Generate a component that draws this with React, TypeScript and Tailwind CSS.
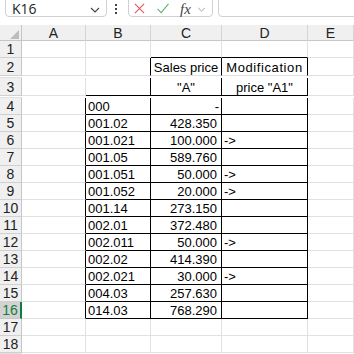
import React from "react";

type Cell = {
  text?: string;
  align?: "left" | "right" | "center";
  extra?: string;
  r?: boolean; // black right border
  b?: boolean; // black bottom border
};

const cols = ["A", "B", "C", "D", "E"];

const rowHeights = [17, 20, 20, 17, 17, 17, 17, 17, 17, 17, 17, 17, 17, 17, 17, 17, 17, 17];

const data: [string, string, string][] = [
  ["000", "-", ""],
  ["001.02", "428.350", ""],
  ["001.021", "100.000", "->"],
  ["001.05", "589.760", ""],
  ["001.051", "50.000", "->"],
  ["001.052", "20.000", "->"],
  ["001.14", "273.150", ""],
  ["002.01", "372.480", ""],
  ["002.011", "50.000", "->"],
  ["002.02", "414.390", ""],
  ["002.021", "30.000", "->"],
  ["004.03", "257.630", ""],
  ["014.03", "768.290", ""],
];

const buildRow = (row: number): Cell[] => {
  // cells A..E
  if (row === 1) return [{}, {}, { b: true }, { b: true }, {}];
  if (row === 2)
    return [
      {},
      { r: true },
      { text: "Sales price", align: "center", r: true },
      { text: "Modification", align: "center", extra: "tracking-[0.6px]", r: true },
      {},
    ];
  if (row === 3)
    return [
      {},
      { r: true, b: true },
      { text: '"A"', align: "center", r: true, b: true },
      { text: 'price "A1"', align: "center", r: true, b: true },
      {},
    ];
  const d = data[row - 4];
  if (d) {
    return [
      { r: true },
      { text: d[0], align: "left", r: true, b: true },
      { text: d[1], align: "right", extra: d[1] === "-" ? "pr-[2px]" : "pr-[4px]", r: true, b: true },
      { text: d[2], align: "left", r: true, b: true },
      {},
    ];
  }
  return [{}, {}, {}, {}, {}];
};

const ChevronDown = ({ className }: { className?: string }) => (
  <svg viewBox="0 0 10 6" className={className} fill="none" stroke="currentColor" strokeWidth="1.1">
    <path d="M1 1l4 4 4-4" />
  </svg>
);

export default function App() {
  return (
    <div className="w-[354px] h-[354px] overflow-hidden bg-white font-['Liberation_Sans',Arial,sans-serif]">
      {/* formula bar */}
      <div className="h-[25px] overflow-hidden bg-white">
        <div className="-mt-[6px] flex items-start">
          <div className="ml-[5px] flex h-[23px] w-[102px] items-start justify-between rounded-[4px] border border-[#d1d1d1] px-[6px] pt-[6px]">
            <span className="text-[14px] leading-[16px] text-[#242424] font-['Open_Sans',sans-serif]">K16</span>
            <ChevronDown className="mt-[6px] h-[6px] w-[10px] text-[#444]" />
          </div>
          <div className="ml-[8px] mt-[10px] flex flex-col gap-[2px]">
            <span className="block h-[2px] w-[2px] bg-[#444]" />
            <span className="block h-[2px] w-[2px] bg-[#444]" />
            <span className="block h-[2px] w-[2px] bg-[#444]" />
          </div>
          <div className="ml-[11px] flex h-[23px] w-[85px] items-start rounded-[4px] border border-[#d1d1d1] pl-[5px] pt-[7px]">
            <svg viewBox="0 0 12 12" className="mt-[1px] h-[11px] w-[11px]" fill="none" stroke="#e0575b" strokeWidth="1.2">
              <path d="M1 1l10 10M11 1L1 11" />
            </svg>
            <svg viewBox="0 0 14 12" className="ml-[11px] mt-[1px] h-[11px] w-[14px]" fill="none" stroke="#5cb66e" strokeWidth="1.2">
              <path d="M1 6.5l4 4L13 1" />
            </svg>
            <span className="ml-[10px] text-[15px] leading-[14px] italic text-[#444] font-['Liberation_Serif',serif]">
              fx
            </span>
            <ChevronDown className="ml-[6px] mt-[5px] h-[5px] w-[9px] text-[#999]" />
          </div>
          <div className="ml-[5px] h-[23px] flex-1 -mr-[10px] rounded-[4px] border border-[#d1d1d1]" />
        </div>
      </div>

      {/* column headers */}
      <div className="grid h-[16px] grid-cols-[22px_64px_65px_71px_86px_1fr] border-b border-[#c6c6c6] bg-[#f0f0f0]">
        <div className="flex items-end justify-end border-r border-[#c6c6c6] p-[2px]">
          <svg viewBox="0 0 10 10" className="h-[9px] w-[9px]">
            <path d="M10 0L10 10L0 10Z" fill="#bdbdbd" />
          </svg>
        </div>
        {cols.map((c) => (
          <div
            key={c}
            className="flex items-center justify-center border-r border-[#d4d4d4] text-[14px] leading-[16px] text-[#222]"
          >
            {c}
          </div>
        ))}
      </div>

      {/* sheet rows */}
      {rowHeights.map((h, i) => {
        const row = i + 1;
        const cells = buildRow(row);
        const selected = row === 16;
        return (
          <div
            key={row}
            className="grid grid-cols-[22px_64px_65px_71px_86px_1fr]"
            style={{ height: h }}
          >
            <div
              className={[
                "flex items-end justify-center border-b text-[14px] leading-[16px]",
                selected
                  ? "border-[#c6c6c6] border-r-2 border-r-[#107c41] bg-[#d2d2d2] text-[#107c41]"
                  : "border-[#d0d0d0] border-r border-r-[#c6c6c6] bg-[#f0f0f0] text-[#222]",
              ].join(" ")}
            >
              {row}
            </div>
            {cells.map((c, j) => (
              <div
                key={j}
                className={[
                  "flex items-end overflow-hidden whitespace-nowrap border-r border-b text-[13px] leading-[15px] text-black",
                  c.r ? "border-r-black" : "border-r-[#e1e1e1]",
                  c.b ? "border-b-black" : "border-b-[#e1e1e1]",
                  c.align === "right"
                    ? "justify-end"
                    : c.align === "center"
                      ? "justify-center"
                      : "justify-start pl-[2px]",
                  c.extra ?? "",
                ].join(" ")}
              >
                {c.text}
              </div>
            ))}
            <div className="border-b border-[#e1e1e1]" />
          </div>
        );
      })}
    </div>
  );
}
